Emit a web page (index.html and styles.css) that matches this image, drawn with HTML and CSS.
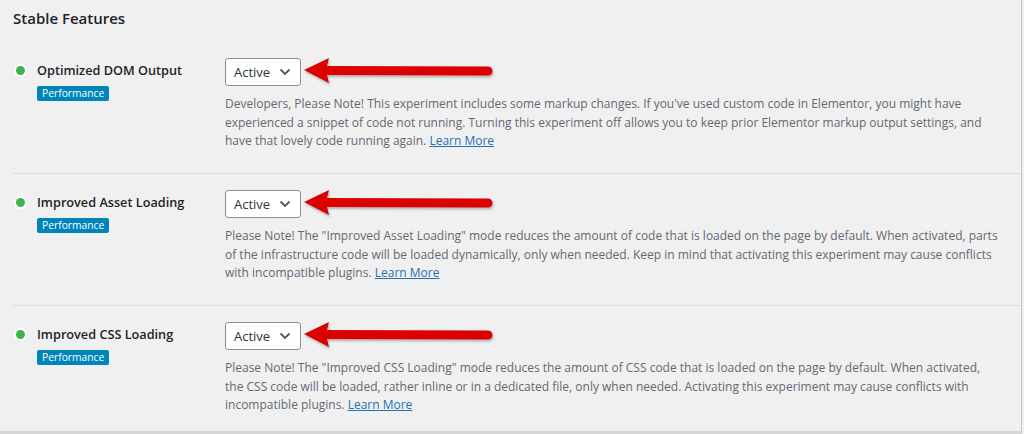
FILE: index.html
```html
<!DOCTYPE html>
<html lang="en">
<head>
    <meta charset="UTF-8">
    <meta name="viewport" content="width=device-width, initial-scale=1.0">
    <title>Experiments</title>
    <link rel="stylesheet" href="styles.css">
</head>
<body>
    <div class="panel">
        <h2 class="section-title">Stable Features</h2>

        <div class="feature">
            <div class="feature-label">
                <div class="feature-name"><span class="dot"></span>Optimized DOM Output</div>
                <span class="tag">Performance</span>
            </div>
            <div class="feature-body">
                <div class="control">
                    <div class="select">Active
                        <svg class="chevron" viewBox="0 0 12 8" width="12" height="8"><path d="M1.5 1.5 6 6l4.5-4.5" fill="none" stroke="#50575e" stroke-width="1.8"/></svg>
                    </div>
                    <svg class="arrow" viewBox="0 0 192 30" width="192" height="30"><path d="M2 14 27 2 25 10 186 10.5a4.5 4.5 0 0 1 0 9L25 19 27 27Z" fill="#dd0000"/></svg>
                </div>
                <p class="desc">Developers, Please Note! This experiment includes some markup changes. If you've used custom code in Elementor, you might have experienced a snippet of code not running. Turning this experiment off allows you to keep prior Elementor markup output settings, and have that lovely code running again. <a href="#">Learn More</a></p>
            </div>
        </div>

        <div class="feature">
            <div class="feature-label">
                <div class="feature-name"><span class="dot"></span>Improved Asset Loading</div>
                <span class="tag">Performance</span>
            </div>
            <div class="feature-body">
                <div class="control">
                    <div class="select">Active
                        <svg class="chevron" viewBox="0 0 12 8" width="12" height="8"><path d="M1.5 1.5 6 6l4.5-4.5" fill="none" stroke="#50575e" stroke-width="1.8"/></svg>
                    </div>
                    <svg class="arrow" viewBox="0 0 192 30" width="192" height="30"><path d="M2 14 27 2 25 10 186 10.5a4.5 4.5 0 0 1 0 9L25 19 27 27Z" fill="#dd0000"/></svg>
                </div>
                <p class="desc">Please Note! The "Improved Asset Loading" mode reduces the amount of code that is loaded on the page by default. When activated, parts of the infrastructure code will be loaded dynamically, only when needed. Keep in mind that activating this experiment may cause conflicts with incompatible plugins. <a href="#">Learn More</a></p>
            </div>
        </div>

        <div class="feature">
            <div class="feature-label">
                <div class="feature-name"><span class="dot"></span>Improved CSS Loading</div>
                <span class="tag">Performance</span>
            </div>
            <div class="feature-body">
                <div class="control">
                    <div class="select">Active
                        <svg class="chevron" viewBox="0 0 12 8" width="12" height="8"><path d="M1.5 1.5 6 6l4.5-4.5" fill="none" stroke="#50575e" stroke-width="1.8"/></svg>
                    </div>
                    <svg class="arrow" viewBox="0 0 192 30" width="192" height="30"><path d="M2 14 27 2 25 10 186 10.5a4.5 4.5 0 0 1 0 9L25 19 27 27Z" fill="#dd0000"/></svg>
                </div>
                <p class="desc">Please Note! The "Improved CSS Loading" mode reduces the amount of CSS code that is loaded on the page by default. When activated,<br>the CSS code will be loaded, rather inline or in a dedicated file, only when needed. Activating this experiment may cause conflicts with incompatible plugins. <a href="#">Learn More</a></p>
            </div>
        </div>
    </div>
</body>
</html>
```

FILE: styles.css
```css
body {
    margin: 0;
    background: #f0f0f1;
    font-family: "Open Sans", "Noto Sans", sans-serif;
    color: #1d2327;
}
.panel {
    width: 1008px;
    height: 423px;
    padding: 8px 0 0 13px;
    border-right: 1px solid #c3c4c7;
    border-bottom: 3px solid #d6d6d8;
    overflow: hidden;
}
.section-title {
    margin: 0 0 14px;
    font-size: 15px;
    line-height: 20px;
    font-weight: 600;
}
.feature {
    display: flex;
    height: 131px;
}
.feature + .feature {
    border-top: 1px solid #dcdcde;
}
.feature-label {
    width: 212px;
    flex-shrink: 0;
    padding-top: 18px;
}
.feature-name {
    display: flex;
    align-items: center;
    font-size: 12.7px;
    line-height: 20px;
    font-weight: 600;
}
.dot {
    width: 9px;
    height: 9px;
    border-radius: 50%;
    background: #3cb54a;
    box-shadow: 0 0 0 2px #fff;
    margin: 0 12px 0 3px;
}
.tag {
    display: inline-block;
    margin: 4px 0 0 24px;
    padding: 0 5px;
    background: #0085ba;
    color: #fff;
    font-size: 10.3px;
    line-height: 15px;
    border-radius: 2px;
}
.feature-body {
    padding-top: 16px;
    width: 782px;
}
.control {
    display: flex;
    align-items: center;
}
.select {
    width: 76px;
    height: 28px;
    box-sizing: border-box;
    display: flex;
    align-items: center;
    justify-content: space-between;
    padding: 0 9px 0 8px;
    background: #fff;
    border: 1px solid #8c8f94;
    border-radius: 3px;
    font-size: 13px;
    color: #2c3338;
}
.arrow {
    margin-left: 1px;
    margin-top: -2px;
    filter: drop-shadow(1px 2px 1px rgba(0, 0, 0, 0.25));
}
.desc {
    margin: 9px 0 0;
    font-size: 12px;
    line-height: 18.5px;
    color: #646970;
}
.desc a {
    color: #2271b1;
}
```
